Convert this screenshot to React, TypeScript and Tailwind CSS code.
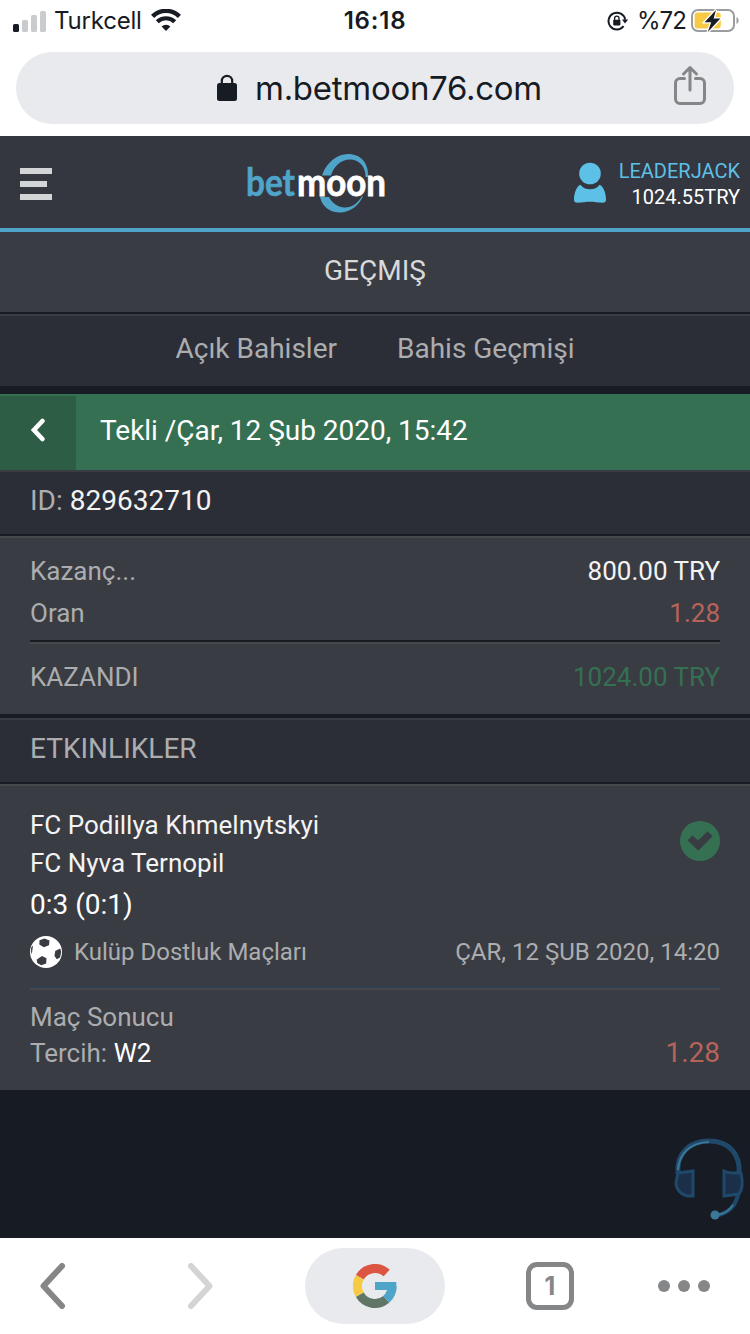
import React from 'react';
import clsx from 'clsx';

interface BetEvent {
  home: string;
  away: string;
  score: string;
  league: string;
  date: string;
  market: string;
  pick: string;
  odds: string;
}

const event: BetEvent = {
  home: 'FC Podillya Khmelnytskyi',
  away: 'FC Nyva Ternopil',
  score: '0:3 (0:1)',
  league: 'Kulüp Dostluk Maçları',
  date: 'ÇAR, 12 ŞUB 2020, 14:20',
  market: 'Maç Sonucu',
  pick: 'W2',
  odds: '1.28',
};

function Wifi() {
  return (
    <svg width="30" height="22" viewBox="0 0 30 22" fill="none" stroke="#171b23" className="mb-0.5">
      <path d="M1.6 7.4 A19 19 0 0 1 28.4 7.4" strokeWidth="4.4" />
      <path d="M6.3 12.8 A12.4 12.4 0 0 1 23.7 12.8" strokeWidth="4.2" />
      <path d="M15 22 L10.6 17.6 A6.4 6.4 0 0 1 19.4 17.6 Z" fill="#171b23" stroke="none" />
    </svg>
  );
}

function RotationLock() {
  return (
    <svg width="22" height="20" viewBox="0 0 22 20" fill="none">
      <path d="M16.6 15.2 A8.4 8.4 0 1 1 18.2 8.6" stroke="#171b23" strokeWidth="2" />
      <path d="M14.9 8.4 H21.2 L18 12.4 Z" fill="#171b23" />
      <rect x="6.2" y="8.8" width="7.2" height="5.6" rx="0.8" fill="#171b23" />
      <path d="M7.6 9 V7.3 a2.2 2.2 0 0 1 4.4 0 V9" stroke="#171b23" strokeWidth="1.3" />
    </svg>
  );
}

function Battery() {
  return (
    <svg width="48" height="26" viewBox="0 0 48 26" className="mb-px">
      <rect x="1" y="2" width="42" height="21" rx="6" fill="none" stroke="#9b9c9f" strokeWidth="2" />
      <path d="M45.5 9 C48.3 10.5 48.3 14.5 45.5 16 Z" fill="#9b9c9f" />
      <rect x="3.6" y="4.6" width="26.2" height="15.8" rx="3.2" fill="#f7ca45" />
      <path d="M25 2 L13.6 14.3 H20.2 L16.8 24 L29.4 10.6 H22.6 Z" fill="#171b23" stroke="#fff" strokeWidth="2.6" paintOrder="stroke" />
    </svg>
  );
}

function StatusBar() {
  return (
    <div className="grid h-10 grid-cols-3 items-center pt-px font-['Inter',sans-serif] text-[24px] leading-[40px] text-[#171b23]">
      <div className="flex items-center pl-[13px]">
        <div className="flex h-[21px] items-end gap-[3px]">
          <span className="h-2 w-1.5 rounded-[1.5px] bg-[#171b23]" />
          <span className="h-3 w-1.5 rounded-[1.5px] bg-[#c9cbce]" />
          <span className="h-[17px] w-1.5 rounded-[1.5px] bg-[#c9cbce]" />
          <span className="h-[21px] w-1.5 rounded-[1.5px] bg-[#c9cbce]" />
        </div>
        <span className="ml-2 w-[97px] whitespace-nowrap tracking-[-0.2px]">Turkcell</span>
        <Wifi />
      </div>
      <div className="text-center font-semibold tracking-[0.8px]">16:18</div>
      <div className="flex items-center justify-end pr-[11px]">
        <RotationLock />
        <span className="mr-[5px] ml-2 tracking-[-0.9px]">%72</span>
        <Battery />
      </div>
    </div>
  );
}

function AddressBar() {
  return (
    <div className="mx-4 mt-3 flex h-[72px] items-center rounded-full bg-[#e9eaee] pr-7 pl-[200px]">
      <svg width="22" height="28" viewBox="0 0 22 28">
        <rect x="1" y="9" width="20" height="18" rx="2.5" fill="#171b23" />
        <path d="M5.8 10 V7 a5.2 5.2 0 0 1 10.4 0 V10" fill="none" stroke="#171b23" strokeWidth="2.2" />
      </svg>
      <span className="ml-[17px] flex-1 pt-px font-['Inter',sans-serif] text-[33px] tracking-[-0.28px] text-[#171b23]">m.betmoon76.com</span>
      <svg width="32" height="40" viewBox="0 0 32 40" fill="none" stroke="#858688" strokeWidth="3" strokeLinecap="round" strokeLinejoin="round" className="mb-1.5">
        <path d="M10.5 13.5 H6 a4.5 4.5 0 0 0 -4.5 4.5 V34 a4.5 4.5 0 0 0 4.5 4.5 H26 a4.5 4.5 0 0 0 4.5 -4.5 V18 a4.5 4.5 0 0 0 -4.5 -4.5 H21.5" />
        <path d="M16 25 V2.5 M9.5 9 L16 2.5 L22.5 9" />
      </svg>
    </div>
  );
}

function Logo() {
  return (
    <svg width="140" height="60" viewBox="0 0 140 60" className="overflow-visible">
      <path d="M76 21.5 C80 9 91 0 102 0 C115 0 123 9.5 122 23 L119.5 23 C119.5 12 113 5.5 104 5.5 C95 5.5 88 12 85 21.5 Z" fill="#4fa4c9" />
      <path d="M74 43 L83 43 C86 49 92 53.5 99 53.5 C106 53.5 112 49 116 42 L117 42 C113 52 103 59 93 58.5 C83 58 76 52 74 43 Z" fill="#4fa4c9" />
      <text x="0" y="41.5" fontFamily="Lato, sans-serif" fontSize="39" fontWeight="700" textLength="49" lengthAdjust="spacingAndGlyphs" fill="#4fa4c9" stroke="#4fa4c9" strokeWidth="0.6">bet</text>
      <text x="51" y="41.5" fontFamily="Lato, sans-serif" fontSize="38" fontWeight="700" textLength="89" lengthAdjust="spacingAndGlyphs" fill="#fff" stroke="#fff" strokeWidth="0.8">moon</text>
    </svg>
  );
}

function Header() {
  return (
    <header className="mt-3 flex h-24 items-center border-b-4 border-[#4fa4c9] bg-[#343640] pr-2.5 pl-5">
      <button className="flex w-8 flex-col gap-[7px] pt-1">
        <span className="h-1.5 w-8 bg-[#d3d4d6]" />
        <span className="h-1.5 w-[27px] bg-[#d3d4d6]" />
        <span className="h-1.5 w-8 bg-[#d3d4d6]" />
      </button>
      <div className="ml-[194px] pt-1">
        <Logo />
      </div>
      <div className="ml-auto flex items-center gap-[13px] pt-1">
        <svg width="32" height="42" viewBox="0 0 32 42" fill="#5dc0e6" className="mb-0.5">
          <circle cx="16" cy="11.5" r="10.8" />
          <path d="M6.5 22.8 C8.5 25.8 12 27.3 16 27.3 C20 27.3 23.5 25.8 25.5 22.8 C29.5 24.5 32 31 32 37.5 C32 40 31 40.7 28.5 40.7 C24 40.5 20 39.8 16 39.8 C12 39.8 8 40.5 3.5 40.7 C1 40.7 0 40 0 37.5 C0 31 2.5 24.5 6.5 22.8 Z" />
        </svg>
        <div className="text-right text-[20px] leading-[26px]">
          <div className="text-[#5dc0e6]">LEADERJACK</div>
          <div className="text-white">1024.55TRY</div>
        </div>
      </div>
    </header>
  );
}

interface RowProps {
  label: string;
  value: string;
  valueClass?: string;
}

function Row({ label, value, valueClass = 'text-[#f3f3f3]' }: RowProps) {
  return (
    <div className="flex h-[42px] items-center justify-between text-[26px]">
      <span>{label}</span>
      <span className={valueClass}>{value}</span>
    </div>
  );
}

function Football() {
  return (
    <svg width="32" height="32" viewBox="0 0 32 32">
      <circle cx="16" cy="16" r="16" fill="#fff" />
      <g fill="#3a3c43">
        <path d="M9.5 4.2 L14.5 2.6 L19.5 4.6 L19 9.2 L13.8 11.3 L9.3 8.5 Z" />
        <path d="M25.2 15 L30.2 12.5 L31.2 16 L30 21.5 L26.8 23.2 L24.5 20 Z" />
        <path d="M6.8 23.5 L12 20 L16.5 22.2 L16.2 27.6 L11.3 29.2 L7.2 27 Z" />
        <path d="M1.2 11.5 L3 9.5 L2.2 15.5 L1 18.5 Z" />
      </g>
    </svg>
  );
}

function WonBadge() {
  return (
    <svg width="40" height="40" viewBox="0 0 40 40">
      <circle cx="20" cy="20" r="20" fill="#367053" />
      <path d="M8 19.4 L12.4 14.8 L18 19.8 L27.8 10.7 L32.2 15.2 L18.4 29.2 Z" fill="#3a3c43" stroke="#3a3c43" strokeWidth="0.8" strokeLinejoin="round" />
    </svg>
  );
}

function Headset() {
  return (
    <svg width="76" height="88" viewBox="0 0 76 88" fill="none">
      <path d="M7 40 C5 18 20 7 38 7 C57 7 70 19 68 41" stroke="#20486a" strokeWidth="5" />
      <path d="M7 36 C8 19 20 8.5 38 8" stroke="#3b7898" strokeWidth="2" />
      <path d="M7 39 L22 37 V62 C12 63 5 57 5 48 Z" fill="#1b3048" stroke="#20486a" strokeWidth="3" />
      <path d="M53 37 C59 40 66 39 70 39 C72 48 71 56 68 60 L53 62 Z" fill="#1b3048" stroke="#20486a" strokeWidth="3" />
      <path d="M67 61 C64 73 57 79 47 81" stroke="#20486a" strokeWidth="4" />
      <path d="M62 71 C58 77 53 80 46 81" stroke="#3b7898" strokeWidth="2" />
      <circle cx="44" cy="81" r="4.5" fill="#3b7898" />
    </svg>
  );
}

function GoogleMark() {
  return (
    <svg width="44" height="44" viewBox="0 0 44 44" fill="none" strokeWidth="9">
      <path d="M6.8 13.25 A17.5 17.5 0 0 1 33.7 9" stroke="#dc5442" />
      <path d="M6.8 30.75 A17.5 17.5 0 0 1 6.8 13.25" stroke="#f7ca45" />
      <path d="M33.2 35.4 A17.5 17.5 0 0 1 6.8 30.75" stroke="#5f7565" />
      <path d="M39.1 22 A17.5 17.5 0 0 1 33.2 35.4" stroke="#4fa4c9" />
      <path d="M22 18 H43.3 V26 H22 Z" fill="#4fa4c9" />
    </svg>
  );
}

function Chevron({ direction, className }: { direction: 'left' | 'right'; className?: string }) {
  return (
    <svg width="26" height="46" viewBox="0 0 26 46" fill="none" stroke="currentColor" strokeWidth="6" strokeLinecap="round" strokeLinejoin="round" className={clsx(className, direction === 'right' && 'rotate-180')}>
      <path d="M22 3 L3.5 23 L22 43" />
    </svg>
  );
}

function Toolbar() {
  return (
    <nav className="flex h-24 items-center bg-white">
      <Chevron direction="left" className="ml-10 text-[#858688]" />
      <Chevron direction="right" className="ml-[121px] text-[#d2d4d6]" />
      <div className="ml-[92px] flex h-[76px] w-[140px] items-center justify-center rounded-full bg-[#e9eaee]">
        <GoogleMark />
      </div>
      <div className="ml-[81px] flex size-12 items-center justify-center rounded-[11px] border-[5px] border-[#858688] pt-px font-['Inter',sans-serif] text-[25px] font-bold text-[#858688]">
        1
      </div>
      <div className="ml-[84px] flex gap-2">
        {[0, 1, 2].map((dot) => (
          <span key={dot} className="size-3 rounded-full bg-[#858688]" />
        ))}
      </div>
    </nav>
  );
}

export default function App() {
  return (
    <div className="flex h-[1334px] w-[750px] flex-col overflow-hidden bg-white font-['Roboto',sans-serif]">
      <StatusBar />
      <AddressBar />
      <Header />

      <main className="flex-1 bg-[#171b23] text-[28px] text-[#acadaf]">
        <h1 className="flex h-20 items-center justify-center bg-[#3a3c43] pb-[3px] text-[#d8d9da]">GEÇMIŞ</h1>

        {/* Tabs */}
        <div className="mt-0.5 flex h-[72px] items-center justify-center gap-[60px] border-t-2 border-[#3a3c43] bg-[#2c2e37] pb-[5px]">
          <button>Açık Bahisler</button>
          <button>Bahis Geçmişi</button>
        </div>

        {/* Bet header */}
        <div className="mt-2 flex h-[76px] border-t-2 border-[#367053] bg-[#367053] text-white">
          <button className="flex w-[76px] items-center justify-center bg-[#2d5e45] pb-[7px]">
            <svg width="14" height="24" viewBox="0 0 14 24" fill="none" stroke="#fff" strokeWidth="4.6" strokeLinecap="round">
              <path d="M11.4 3 L3 12 L11.4 21" />
            </svg>
          </button>
          <div className="flex items-center pb-[5px] pl-6 tracking-[-0.03px]">Tekli /Çar, 12 Şub 2020, 15:42</div>
        </div>
        <div className="flex h-16 items-center gap-[7px] border-t-2 border-[#3a3c43] bg-[#2c2e37] pb-[5px] pl-[30px]">
          <span>ID:</span>
          <span className="text-[#f3f3f3]">829632710</span>
        </div>

        {/* Amounts */}
        <div className="mt-0.5 h-[178px] border-t-2 border-[#46484c] bg-[#3a3c43] px-[30px] pt-3">
          <Row label="Kazanç..." value="800.00 TRY" />
          <Row label="Oran" value="1.28" valueClass="text-[#b8635a]" />
          <div className="mt-1.5 mb-3 h-1 border-t-2 border-b-2 border-t-[#171b23] border-b-[#46484c]" />
          <Row label="KAZANDI" value="1024.00 TRY" valueClass="text-[#367053]" />
        </div>

        {/* Events */}
        <div className="mt-1 flex h-16 items-center border-t-2 border-[#3a3c43] bg-[#2c2e37] pb-[5px] pl-[30px]">ETKINLIKLER</div>
        <div className="mt-0.5 h-[306px] border-t-2 border-[#46484c] bg-[#3a3c43] px-[30px] pt-5 text-[26px]">
          <div className="flex justify-between">
            <div className="leading-[38px] text-[#f3f3f3]">
              <div>{event.home}</div>
              <div>{event.away}</div>
              <div className="text-[28px] leading-[45px] text-white">{event.score}</div>
            </div>
            <div className="pt-[15px]">
              <WonBadge />
            </div>
          </div>
          <div className="mt-[9px] flex h-8 items-center text-[24px]">
            <Football />
            <span className="ml-3 flex-1">{event.league}</span>
            <span>{event.date}</span>
          </div>
          <div className="mt-[18px] mb-[9px] h-1 border-t-2 border-b-2 border-t-[#2f4050] border-b-[#46484c]" />
          <div className="leading-[36px]">{event.market}</div>
          <div className="flex justify-between leading-[36px]">
            <span>
              Tercih: <span className="text-white">{event.pick}</span>
            </span>
            <span className="text-[28px] text-[#b8635a]">{event.odds}</span>
          </div>
        </div>

        {/* Live support */}
        <div className="mt-11 flex justify-end pr-[3px]">
          <Headset />
        </div>
      </main>

      <Toolbar />
    </div>
  );
}
